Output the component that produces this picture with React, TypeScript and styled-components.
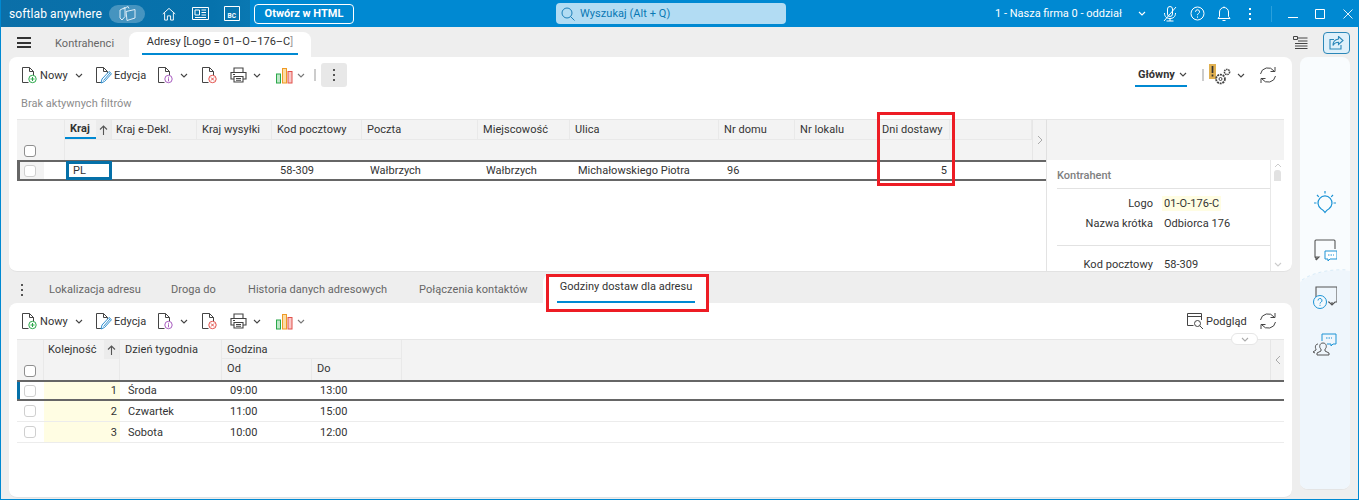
import React from "react";
import styled, { createGlobalStyle } from "styled-components";

const Global = createGlobalStyle`
  html, body { margin: 0; padding: 0; background: #fff; overflow: hidden; }
  * { box-sizing: border-box; }
  body { font-family: Roboto, "Liberation Sans", sans-serif; font-size: 11px; color: #333; }
`;

const Win = styled.div`
  width: 1359px; height: 500px; display: flex; flex-direction: column;
  background: #eeeeee; border: 1px solid #0089d2; border-top: 0; overflow: hidden; position: relative;
`;
const TitleBar = styled.header`
  height: 27px; flex: none; display: flex; align-items: center; background: #0089d2; margin: 0 -1px; color: #fff;
`;
const Brand = styled.div`
  width: 250px; height: 27px; flex: none; display: flex; align-items: center; padding-left: 9px;
  background: linear-gradient(90deg, #0b6fa8 0%, #0672ac 85%, #0a78b2 100%);
`;
const BrandName = styled.span`font-size: 12px; width: 100px; white-space: nowrap; letter-spacing: .1px;`;
const BrandPill = styled.div`
  width: 36px; height: 18px; border-radius: 9px; background: rgba(255,255,255,.25); display: flex; align-items: center; justify-content: center; margin-right: 17px;
`;
const HtmlButton = styled.button`
  width: 100px; height: 20px; margin-left: 4px; border: 1px solid #fff; border-radius: 4px; background: transparent; color: #fff; font: 700 11px Roboto, sans-serif; padding: 0;
`;
const SearchBox = styled.div`
  width: 230px; height: 21px; margin-left: 202px; border-radius: 4px; background: #b2dcf3; color: #0a78b4; display: flex; align-items: center; gap: 5px; padding-left: 5px; font-size: 11px; letter-spacing: .05px;
`;
const Company = styled.span`margin-left: 209px; width: 127px; white-space: nowrap; font-size: 11px;`;
const TitleIcons = styled.div`display: flex; align-items: center; margin-left: 14px;`;
const TIcon = styled.span<{ $w: number; $pl?: number }>`width: ${p => p.$w}px; height: 20px; padding-left: ${p => p.$pl ?? 0}px; display: flex; align-items: center; justify-content: center; flex: none;`;
const TitleSep = styled.i`width: 1px; height: 16px; background: #2aa0dc; display: block;`;
const BcText = styled.text`font: 700 6.5px Roboto, sans-serif; fill: #fff;`;

const StripTop = styled.div`height: 30px; flex: none; display: flex; align-items: flex-end; padding-left: 16px;`;
const Burger = styled.div`width: 14px; height: 11px; margin-bottom: 9px; border-top: 2px solid #333; border-bottom: 2px solid #333; position: relative; margin-right: 24px;
  &::after { content: ""; position: absolute; left: 0; right: 0; top: 2.5px; height: 2px; background: #333; }`;
const PlainTab = styled.span<{ $w?: number }>`
  color: #666; font-size: 11px; white-space: nowrap; ${p => p.$w ? `width:${p.$w}px;` : ""} padding-bottom: 7px; letter-spacing: .05px;
`;
const ActiveTab = styled.div<{ $w: number; $pad: number; $h: number }>`
  width: ${p => p.$w}px; height: ${p => p.$h}px; background: #fff; border-radius: 8px 8px 0 0; padding: 0 ${p => p.$pad}px; display: flex; flex-direction: column; align-items: stretch; text-align: center; color: #333; white-space: nowrap; letter-spacing: .03px;
`;
const TabLabel = styled.span`flex: 1; display: flex; align-items: center; justify-content: center; padding-bottom: 2px;`;
const TabMark = styled.i<{ $mb: number }>`display: block; height: 2px; background: #0089d2; margin-bottom: ${p => p.$mb}px;`;
const Dim = styled.span`color: #999;`;
const StripRight = styled.div`margin-left: auto; display: flex; align-items: center; height: 30px; align-self: flex-start; margin-right: 8px; padding-top: 1px;`;
const ShareBtn = styled.div`width: 27px; height: 22px; margin-left: 15px; border: 1px solid #2b87b8; border-radius: 4px; background: #dff0fa; display: flex; align-items: center; justify-content: center;`;

const Workspace = styled.div`flex: 1; display: flex; min-height: 0; padding-left: 8px;`;
const MainCol = styled.div`width: 1283px; display: flex; flex-direction: column; flex: none;`;
const Panel = styled.section<{ $h: number }>`
  height: ${p => p.$h}px; background: #fff; border-radius: 8px; flex: none; padding: 0 8px; position: relative; border-bottom: 1px solid #e2e2e2; display: flex; flex-direction: column;
`;
const Toolbar = styled.div`height: 24px; margin-top: 6px; display: flex; align-items: center; flex: none; padding-left: 4px; color: #333;`;
const TLabel = styled.span<{ $w: number }>`width: ${p => p.$w}px; white-space: nowrap; color: #333; font-size: 11px; letter-spacing: .05px;`;
const TSlot = styled.span<{ $w: number }>`width: ${p => p.$w}px; flex: none; display: flex; align-items: center;`;
const Chevron = styled.span<{ $w: number }>`width: ${p => p.$w}px; flex: none; display: flex; justify-content: center; align-items: center;`;
const VSep = styled.i<{ $ml: number; $mr: number }>`width: 2px; height: 12px; background: #ccc; margin-left: ${p => p.$ml}px; margin-right: ${p => p.$mr}px; flex: none;`;
const DotsBtn = styled.div`width: 26px; height: 24px; border-radius: 3px; background: #e8e8e8; display: flex; align-items: center; justify-content: center;`;
const Spring = styled.div`flex: 1;`;
const MainView = styled.div`width: 52px; height: 24px; border-bottom: 2px solid #0089d2; display: flex; align-items: center; padding: 0 0 0 3px; font-weight: 700; color: #333; gap: 4px; flex: none;`;
const FilterLine = styled.div`height: 16px; margin-top: 9px; margin-bottom: 7px; padding-left: 4px; color: #8c8c8c; font-size: 11px; line-height: 16px; letter-spacing: .03px; flex: none;`;

const Table = styled.div`flex: 1; display: flex; min-height: 0;`;
const TableStack = styled.div`flex: 1; display: flex; flex-direction: column; min-height: 0; margin-top: 6px;`;
const HeadLine = styled.div`display: flex; flex: none;`;
const LeftPane = styled.div<{ $w: number }>`width: ${p => p.$w}px; flex: none; display: flex; flex-direction: column;`;
const HeadGrid = styled.div<{ $cols: string; $rows: string; $grow?: boolean }>`
  flex: ${p => p.$grow ? "1" : "none"}; display: grid; grid-template-columns: ${p => p.$cols}; grid-template-rows: ${p => p.$rows}; background: #f3f3f3; border-top: 1px solid #e6e6e6;
`;
const Hd = styled.div<{ $pl?: number; $b?: boolean; $line?: boolean; $nr?: boolean; $pb?: number }>`
  padding-left: ${p => p.$pl ?? 5}px; padding-bottom: ${p => p.$pb ?? 1}px; color: #333; white-space: nowrap; display: flex; align-items: center; font-size: 11px; letter-spacing: .06px; font-weight: ${p => p.$b ? 700 : 400};
  border-right: ${p => p.$nr ? 0 : "1px solid #e9e9e9"}; ${p => p.$line ? "border-bottom: 1px solid #e9e9e9;" : ""} min-width: 0;
`;
const SortHd = styled(Hd)`padding: 0; align-items: stretch;`;
const SortName = styled.span<{ $w: number; $mark?: boolean }>`width: ${p => p.$w}px; display: flex; align-items: center; padding-left: ${p => p.$mark ? 5 : 4}px; padding-bottom: 1px; ${p => p.$mark ? "border-bottom: 2px solid #0089d2;" : ""}`;
const SortArrow = styled.span`flex: 1; display: flex; align-items: center; justify-content: center; background: #ececec;`;
const CheckHd = styled(Hd)`padding: 0 0 1px 7px; align-items: flex-end; grid-row: 1 / 3;`;
const EndHd = styled(Hd)`grid-column: 13; grid-row: 1 / 3; padding: 0; justify-content: center; border-left: 1px solid #e6e6e6; border-right: 0;`;
const FillHd = styled(Hd)`grid-column: 2 / 13; border-right: 0;`;
const GroupHd = styled(Hd)`grid-column: 4 / 6;`;
const Box = styled.span<{ $dark?: boolean }>`display: block; width: 12px; height: 12px; border: 1px solid ${p => p.$dark ? "#8f8f8f" : "#cfcfcf"}; border-radius: 3px; background: #fff; margin-bottom: ${p => p.$dark ? 2 : 0}px;`;
const Row = styled.div<{ $cols: string; $sel?: boolean }>`
  display: grid; grid-template-columns: ${p => p.$cols}; height: 21px; align-items: stretch;
  ${p => p.$sel ? "border-top: 2px solid #666; border-bottom: 2px solid #666;" : "border-bottom: 1px solid #ececec;"}
  position: relative; flex: none;
`;
const Cell = styled.div<{ $r?: boolean; $pl?: number; $y?: boolean; $focus?: boolean }>`
  display: flex; align-items: center; white-space: nowrap; color: #333; font-size: 11px; letter-spacing: .01px; min-width: 0;
  justify-content: ${p => p.$r ? "flex-end" : "flex-start"};
  padding-left: ${p => p.$pl ?? 8}px; padding-right: 3px;
  ${p => p.$y ? "background: #fffde3;" : ""}
  ${p => p.$focus ? "box-shadow: inset 0 0 0 3px #0570a8; padding-left: 7px; margin: -1px 0 -1px 1px; background: #fff; position: relative;" : ""}
`;
const CheckCell = styled(Cell)`background: linear-gradient(90deg, #f3f3f3 27px, #fff 27px); padding-left: 7px;`;
const BlueTick = styled.i<{ $grey?: boolean }>`position: absolute; left: 0; top: 0; bottom: 0; width: 3px; background: ${p => p.$grey ? "#666" : "#0570a8"};`;
const Detail = styled.div`flex: 1; display: flex; flex-direction: column; min-width: 0;`;
const DetailHead = styled.div`height: 41px; background: #f3f3f3; border-top: 1px solid #e6e6e6; border-left: 1px solid #e0e0e0; flex: none;`;
const DetailBody = styled.div`flex: 1; display: flex; min-height: 0; overflow: hidden; border-left: 1px solid #e3e3e3;`;
const DetailForm = styled.div`width: 224px; flex: none; padding: 0 0 0 10px; border-right: 1px solid #e8e8e8; overflow: hidden;`;
const DetailTitle = styled.div`height: 29px; padding-top: 8px; line-height: 16px; color: #808080; font-weight: 500; border-bottom: 1px solid #e2e2e2;`;
const Field = styled.div<{ $mt?: number }>`display: flex; align-items: center; height: 20px; margin-top: ${p => p.$mt ?? 0}px; letter-spacing: .05px;`;
const FieldName = styled.span`width: 96px; text-align: right; color: #333; white-space: nowrap; flex: none;`;
const FieldValue = styled.span<{ $y?: boolean }>`margin-left: 9px; padding: 1px 2px; color: #333; ${p => p.$y ? "background: #fffde3;" : ""}`;
const Rule = styled.div`height: 1px; background: #e2e2e2; margin-top: 12px;`;
const ScrollCol = styled.div`flex: 1; display: flex; flex-direction: column; align-items: center; padding-top: 3px;`;
const ScrollThumb = styled.i`display: block; width: 7px; height: 11px; background: #e2e2e2; border-radius: 3px 3px 0 0; margin-top: 2px;`;
const ScrollDown = styled.span`margin-top: auto; padding-bottom: 1px;`;
const ArrowCol = styled.div`width: 14px; flex: none; border-left: 1px solid #e6e6e6; border-top: 1px solid #e6e6e6; display: flex; align-items: center; justify-content: center; background: #f3f3f3;`;

const BottomTabs = styled.div`height: 31px; flex: none; display: flex; align-items: flex-end; padding-left: 11px;`;
const TabDots = styled.span`width: 4px; margin-bottom: 7px; margin-right: 25px; display: flex;`;
const Pill = styled.div`position: absolute; right: 34px; top: 30px; width: 27px; height: 12px; border-radius: 6px; background: #fff; border: 1px solid #e6e6e6; display: flex; align-items: center; justify-content: center; z-index: 2;`;
const RedBox = styled.div<{ $l: number; $t: number; $w: number; $h: number }>`position: absolute; left: ${p => p.$l}px; top: ${p => p.$t}px; width: ${p => p.$w}px; height: ${p => p.$h}px; border: 3px solid #ed1c24; z-index: 5; pointer-events: none;`;

const Sidebar = styled.aside`
  width: 50px; height: 433px; margin-left: 8px; background: #f9fcfe; border-radius: 8px; flex: none; display: flex; flex-direction: column; align-items: center; padding-top: 134px; gap: 23px; position: relative; overflow: hidden; border-bottom: 1px solid #e4e4e4;
`;
const SideWave = styled.svg`position: absolute; left: 0; top: 210px; width: 50px; height: 223px;`;
const SideIcon = styled.svg`width: 24px; height: 24px; position: relative; flex: none;`;

/* ---------- icons ---------- */
const S = "#444";
const Doc = ({ badge }: { badge: "new" | "edit" | "info" | "del" }) => (
  <svg width="17" height="17" viewBox="0 0 17 17" fill="none" style={{ display: "block" }}>
    <path d="M1.5 .5h7l4 4v4M8.5.5v4h4M1.5.5v15h6" stroke={S} strokeWidth="1" />
    {badge === "new" && (<g><circle cx="11.5" cy="12" r="3.7" fill="#fff" stroke="#2aa84a" /><path d="M11.5 10v4M9.5 12h4" stroke="#2aa84a" /></g>)}
    {badge === "info" && (<g><circle cx="11.5" cy="12" r="3.7" fill="#fff" stroke="#a85cc0" /><path d="M11.5 11.3v3M11.5 9.8v.9" stroke="#a85cc0" /></g>)}
    {badge === "del" && (<g><circle cx="11.5" cy="12" r="3.7" fill="#fff" stroke="#e2504a" /><path d="M10 10.5l3 3M13 10.5l-3 3" stroke="#e2504a" /></g>)}
    {badge === "edit" && (<g><path d="M6 16l1-4L14 4.500l2.500 2.200L9.500 14.500z" fill="#fff" stroke="#2f8fd0" /><path d="M8.500 13.500l6.500-7.500" stroke="#2f8fd0" /></g>)}
  </svg>
);
const Chev = ({ c = "#444", w = 8 }: { c?: string; w?: number }) => (
  <svg width={w} height="5" viewBox="0 0 8 5" fill="none"><path d="M1 1l3 3 3-3" stroke={c} strokeWidth="1.1" /></svg>
);
const Printer = () => (
  <svg width="17" height="16" viewBox="0 0 17 16" fill="none" style={{ display: "block" }}>
    <path d="M4 5V1h9v4M4 12H1V5.5h15V12h-3" stroke={S} strokeWidth="1.1" />
    <path d="M4 9.5h9v5.500H4zM3 7.500h2M6 11.500h5M6 13.200h5" stroke={S} strokeWidth="1.1" />
  </svg>
);
const Bars = () => (
  <svg width="17" height="17" viewBox="0 0 17 17" fill="none" style={{ display: "block" }}>
    <rect x=".5" y="7" width="4" height="9" fill="#bfe8c8" stroke="#2aa84a" />
    <rect x="6.5" y="1.5" width="4" height="14.5" fill="#fbdca6" stroke="#ef9a25" />
    <rect x="12" y="4.5" width="4" height="11.5" fill="#f8c9c9" stroke="#e2504a" />
  </svg>
);
const Refresh = () => (
  <svg width="18" height="18" viewBox="0 0 18 18" fill="none" style={{ display: "block" }}>
    <path d="M1.5 8A7.5 7.5 0 0 1 15 5M16.5 10A7.5 7.5 0 0 1 3 13" stroke={S} />
    <path d="M16 1v4.500h-4.500M2 17v-4.500h4.500" stroke={S} />
  </svg>
);
const VDots = ({ c = "#555" }: { c?: string }) => (
  <svg width="4" height="12" viewBox="0 0 4 12"><g fill={c}><rect x="1" y="0" width="2" height="2" /><rect x="1" y="5" width="2" height="2" /><rect x="1" y="10" width="2" height="2" /></g></svg>
);
const Up = () => (
  <svg width="9" height="10" viewBox="0 0 9 10" fill="none"><path d="M4.500 10V1M1 4.500L4.500 1 8 4.500" stroke="#555" strokeWidth="1.1" /></svg>
);
const Gears = () => (
  <svg width="23" height="22" viewBox="0 0 23 22" fill="none" style={{ display: "block" }}>
    <rect x="0" y="0" width="7" height="15" fill="#e0b050" />
    <path d="M3.500 2v7M3.500 10.500v2" stroke="#333" strokeWidth="1.700" />
    <circle cx="11.500" cy="15" r="4.400" stroke={S} strokeDasharray="2 .8" strokeWidth="1.800" />
    <circle cx="11.500" cy="15" r="1.500" stroke={S} />
    <circle cx="18" cy="8" r="2.600" stroke={S} strokeDasharray="1.500 .7" strokeWidth="1.500" />
  </svg>
);

const topCols = "48px 47px 85px 75px 90px 116px 92px 149px 76px 83px 72px 82px 14px";
const botCols = "27px 76px 102px 90px 90px 1fr";

const ActionItems = () => (
  <>
    <TSlot $w={19}><Doc badge="new" /></TSlot>
    <TLabel $w={33}>Nowy</TLabel>
    <Chevron $w={12}><Chev /></Chevron>
    <TSlot $w={10} />
    <TSlot $w={19}><Doc badge="edit" /></TSlot>
    <TLabel $w={43}>Edycja</TLabel>
    <TSlot $w={21}><Doc badge="info" /></TSlot>
    <Chevron $w={12}><Chev /></Chevron>
    <TSlot $w={11} />
    <TSlot $w={29}><Doc badge="del" /></TSlot>
    <TSlot $w={21}><Printer /></TSlot>
    <Chevron $w={12}><Chev /></Chevron>
    <TSlot $w={13} />
    <TSlot $w={19}><Bars /></TSlot>
    <Chevron $w={12}><Chev c="#777" /></Chevron>
  </>
);

export default function App() {
  return (
    <Win>
      <Global />
      <TitleBar>
        <Brand>
          <BrandName>softlab anywhere</BrandName>
          <BrandPill>
            <svg width="17" height="15" viewBox="0 0 17 15" fill="none" stroke="#dcebf5"><path d="M1 4l5-2.500v9L3 14 1 12zM4 3l5-2.500 1 2M7 5.500l9-2v8.500l-8 2.500z" /></svg>
          </BrandPill>
          <TIcon $w={14}>
            <svg width="15" height="14" viewBox="0 0 15 14" fill="none" stroke="#fff"><path d="M.8 7L7.500 1l6.700 6M2.800 5.500v8h3V9h3.400v4.500h3v-8" /></svg>
          </TIcon>
          <TIcon $w={48}>
            <svg width="17" height="13" viewBox="0 0 17 13" fill="none" stroke="#fff"><path d="M.5.500h16v12H.5zM3 3h4.500v5H3zM9.500 3H14M9.500 5.500H14M9.500 8H14M3 10.500h11" /></svg>
          </TIcon>
          <TIcon $w={16}>
            <svg width="16" height="15" viewBox="0 0 16 15" fill="none"><path d="M.5.500h15v14H.5z" stroke="#fff" /><BcText x="3.500" y="11.500">BC</BcText></svg>
          </TIcon>
        </Brand>
        <HtmlButton>Otwórz w HTML</HtmlButton>
        <SearchBox>
          <svg width="14" height="14" viewBox="0 0 14 14" fill="none" stroke="#1d7fb8"><circle cx="6" cy="6" r="5" /><path d="M9.500 9.500L13.500 13.500" /></svg>
          Wyszukaj (Alt + Q)
        </SearchBox>
        <Company>1 - Nasza firma 0 - oddział</Company>
        <TitleIcons>
          <TIcon $w={12}><Chev c="#fff" /></TIcon>
          <TIcon $w={40} $pl={4}>
            <svg width="14" height="16" viewBox="0 0 14 16" fill="none" stroke="#fff"><path d="M4.500 8V3a2.500 2.500 0 0 1 5 0v5a2.500 2.500 0 0 1-5 0zM1.500 7c0 4 2.500 5.500 5.500 5.500S12.500 11 12.500 7M7 12.500V15M3.500 15h7M1 15L13 1" /></svg>
          </TIcon>
          <TIcon $w={18}>
            <svg width="15" height="15" viewBox="0 0 15 15" fill="none" stroke="#fff"><circle cx="7.500" cy="7.500" r="6.500" /><path d="M5.500 5.800a2 2 0 1 1 3 1.700c-.7.400-1 .8-1 1.700M7.500 10.500v1.200" /></svg>
          </TIcon>
          <TIcon $w={36}>
            <svg width="14" height="16" viewBox="0 0 14 16" fill="none" stroke="#fff"><path d="M1 12.500h12l-1.500-2V6a4.500 4.500 0 0 0-9 0v4.500zM5.500 14.500h3M7 1.500V.5" /></svg>
          </TIcon>
          <TIcon $w={16}><VDots c="#fff" /></TIcon>
          <TIcon $w={26}><TitleSep /></TIcon>
          <TIcon $w={18}><svg width="10" height="10" viewBox="0 0 10 10"><path d="M0 8.500h10" stroke="#fff" /></svg></TIcon>
          <TIcon $w={36}><svg width="10" height="10" viewBox="0 0 10 10" fill="none"><path d="M.5.500h9v9h-9z" stroke="#fff" /></svg></TIcon>
          <TIcon $w={20}><svg width="10" height="10" viewBox="0 0 10 10" fill="none" stroke="#dff1fb"><path d="M.5.500l9 9M9.500.500l-9 9" /></svg></TIcon>
        </TitleIcons>
      </TitleBar>

      <StripTop>
        <Burger />
        <PlainTab $w={74}>Kontrahenci</PlainTab>
        <ActiveTab $w={182} $pad={13} $h={25}>
          <TabLabel>Adresy [Logo = 01–O–176–C<Dim>]</Dim></TabLabel>
          <TabMark $mb={2} />
        </ActiveTab>
        <StripRight>
          <svg width="15" height="14" viewBox="0 0 15 14" fill="none" stroke="#444"><path d="M.500.500h4v3h-4zM5 2h9.500M5 5h9.500M2 7.500h12.500M2 10h12.500M2 12.500h12.500" /></svg>
          <ShareBtn>
            <svg width="15" height="14" viewBox="0 0 15 14" fill="none" stroke="#2b87b8" strokeWidth="1.1"><path d="M12 9v4H1V3.500h4" /><path d="M9.500.500L14 4.500 9.500 8.500V6.300C6.500 6.300 5 7.500 4 9.500c0-4 2-6 5.500-6.500z" /></svg>
          </ShareBtn>
        </StripRight>
      </StripTop>

      <Workspace>
        <MainCol>
          <Panel $h={215}>
            <Toolbar>
              <ActionItems />
              <VSep $ml={7} $mr={5} />
              <DotsBtn><VDots /></DotsBtn>
              <Spring />
              <MainView>Główny <Chev /></MainView>
              <VSep $ml={15} $mr={5} />
              <Gears />
              <Chevron $w={18}><Chev /></Chevron>
              <TSlot $w={9} />
              <TSlot $w={19}><Refresh /></TSlot>
              <TSlot $w={6} />
            </Toolbar>
            <FilterLine>Brak aktywnych filtrów</FilterLine>
            <Table>
              <LeftPane $w={1029}>
                <HeadGrid $cols={topCols} $rows="20px 20px">
                  <CheckHd><Box $dark /></CheckHd>
                  <SortHd $line>
                    <SortName $w={31} $mark><b>Kraj</b></SortName>
                    <SortArrow><Up /></SortArrow>
                  </SortHd>
                  {["Kraj e-Dekl.", "Kraj wysyłki", "Kod pocztowy", "Poczta", "Miejscowość", "Ulica", "Nr domu", "Nr lokalu", "Dni dostawy"].map(t => (
                    <Hd key={t} $line $pl={t === "Dni dostawy" || t === "Kraj e-Dekl." ? 4 : 5}>{t}</Hd>
                  ))}
                  <Hd $line />
                  <EndHd>
                    <svg width="6" height="10" viewBox="0 0 6 10" fill="none"><path d="M1 1l4 4-4 4" stroke="#aaa" /></svg>
                  </EndHd>
                  <FillHd />
                </HeadGrid>
                <Row $cols={topCols} $sel>
                  <BlueTick $grey />
                  <CheckCell $pl={7}><Box /></CheckCell>
                  <Cell $focus>PL</Cell>
                  <Cell /><Cell />
                  <Cell>58-309</Cell>
                  <Cell>Wałbrzych</Cell>
                  <Cell>Wałbrzych</Cell>
                  <Cell>Michałowskiego Piotra</Cell>
                  <Cell>96</Cell>
                  <Cell />
                  <Cell $r>5</Cell>
                  <Cell /><Cell />
                </Row>
              </LeftPane>
              <Detail>
                <DetailHead />
                <DetailBody>
                  <DetailForm>
                    <DetailTitle>Kontrahent</DetailTitle>
                    <Field $mt={4}><FieldName>Logo</FieldName><FieldValue $y>01-O-176-C</FieldValue></Field>
                    <Field><FieldName>Nazwa krótka</FieldName><FieldValue>Odbiorca 176</FieldValue></Field>
                    <Rule />
                    <Field $mt={8}><FieldName>Kod pocztowy</FieldName><FieldValue>58-309</FieldValue></Field>
                  </DetailForm>
                  <ScrollCol>
                    <svg width="8" height="5" viewBox="0 0 8 5" fill="none"><path d="M1 4l3-3 3 3" stroke="#ccc" /></svg>
                    <ScrollThumb />
                    <ScrollDown><Chev c="#ccc" /></ScrollDown>
                  </ScrollCol>
                </DetailBody>
              </Detail>
            </Table>
          </Panel>

          <BottomTabs>
            <TabDots><VDots /></TabDots>
            <PlainTab $w={122}>Lokalizacja adresu</PlainTab>
            <PlainTab $w={77}>Droga do</PlainTab>
            <PlainTab $w={171}>Historia danych adresowych</PlainTab>
            <PlainTab $w={124}>Połączenia kontaktów</PlainTab>
            <ActiveTab $w={166} $pad={14} $h={29}>
              <TabLabel>Godziny dostaw dla adresu</TabLabel>
              <TabMark $mb={0} />
            </ActiveTab>
          </BottomTabs>

          <Panel $h={195}>
            <Toolbar>
              <ActionItems />
              <Spring />
              <TSlot $w={19}>
                <svg width="17" height="16" viewBox="0 0 17 16" fill="none" stroke="#444"><path d="M.5 12.500V.500h14V7M.5 3.500h14M.5 12.500h6" /><circle cx="10.500" cy="10.500" r="3" /><path d="M12.700 12.700L16 16" /></svg>
              </TSlot>
              <TLabel $w={53}>Podgląd</TLabel>
              <TSlot $w={19}><Refresh /></TSlot>
              <TSlot $w={6} />
            </Toolbar>
            <Pill><Chev c="#aaa" w={10} /></Pill>
            <TableStack>
              <HeadLine>
                <HeadGrid $cols={botCols} $rows="19px 21px" $grow>
                  <CheckHd><Box $dark /></CheckHd>
                  <SortHd>
                    <SortName $w={60}>Kolejność</SortName>
                    <SortArrow><Up /></SortArrow>
                  </SortHd>
                  <Hd>Dzień tygodnia</Hd>
                  <GroupHd $line $pb={0}>Godzina</GroupHd>
                  <Hd $nr />
                  <Hd />
                  <Hd />
                  <Hd $pb={2}>Od</Hd>
                  <Hd $pb={2}>Do</Hd>
                  <Hd $nr />
                </HeadGrid>
                <ArrowCol>
                  <svg width="6" height="10" viewBox="0 0 6 10" fill="none"><path d="M5 1L1 5l4 4" stroke="#aaa" /></svg>
                </ArrowCol>
              </HeadLine>
              <Row $cols={botCols} $sel>
                <BlueTick />
                <Cell $pl={7}><Box /></Cell>
                <Cell $y $r>1</Cell>
                <Cell>Środa</Cell>
                <Cell>09:00</Cell>
                <Cell>13:00</Cell>
                <Cell />
              </Row>
              <Row $cols={botCols}>
                <Cell $pl={7}><Box /></Cell>
                <Cell $y $r>2</Cell>
                <Cell>Czwartek</Cell>
                <Cell>11:00</Cell>
                <Cell>15:00</Cell>
                <Cell />
              </Row>
              <Row $cols={botCols}>
                <Cell $pl={7}><Box /></Cell>
                <Cell $y $r>3</Cell>
                <Cell>Sobota</Cell>
                <Cell>10:00</Cell>
                <Cell>12:00</Cell>
                <Cell />
              </Row>
            </TableStack>
          </Panel>
        </MainCol>

        <Sidebar>
          <SideWave viewBox="0 0 50 223" fill="none">
            <path d="M0 15C15 4 35 2 50 4V223H0z" fill="#eff6fc" />
            <path d="M2 13C15 4 35 2 48 3" stroke="#d8ebf8" strokeDasharray="3 3" />
          </SideWave>
          <SideIcon viewBox="0 0 24 24" fill="none" stroke="#1c93d5" strokeWidth="1.200">
            <path d="M8 17.700A7 7 0 1 1 16 17.700C14.500 18.600 13 20 12 21.500 11 20 9.500 18.600 8 17.700z" />
            <path d="M12 0v2.500M1 12h2.500M20.500 12H23M4 4l1.800 1.800M20 4l-1.800 1.800" />
          </SideIcon>
          <SideIcon viewBox="0 0 24 24" fill="none">
            <path d="M3 22l3-3H2V3a1 1 0 0 1 1-1h18a1 1 0 0 1 1 1v8M2 19l2 3M3 22v-3" stroke="#555" strokeWidth="1.100" />
            <path d="M12 13h12v8h-7l-2 2v-2h-3z" fill="#fff" stroke="#1c93d5" />
            <path d="M15 17h6" stroke="#1c93d5" strokeDasharray="1.500 1" />
          </SideIcon>
          <SideIcon viewBox="0 0 24 24" fill="none">
            <path d="M3 12V2h21v15h-2l-3 3-3-3h-1M19 20v-3" stroke="#555" strokeWidth="1.100" />
            <circle cx="7" cy="17" r="6.500" fill="#f3f9fd" stroke="#1c93d5" />
            <path d="M5 15.500a2 2 0 1 1 3 1.700c-.7.400-1 .8-1 1.300M7 19.800v1" stroke="#1c93d5" />
          </SideIcon>
          <SideIcon viewBox="0 0 24 24" fill="none">
            <path d="M9 9V2h14v10h-3l-2 2v-2h-4" stroke="#1c93d5" />
            <path d="M13 6h6" stroke="#1c93d5" strokeDasharray="1.500 1" />
            <path d="M4 23v-2l4-2v-2c-2-1-2-6 2-6s4 5 2 6v2l4 2v2zM5 12c-3 0-3 4-2 5v1l-3 2 2 1" stroke="#555" />
          </SideIcon>
        </Sidebar>
      </Workspace>

      <RedBox $l={876} $t={112} $w={78} $h={74} />
      <RedBox $l={545} $t={274} $w={163} $h={38} />
    </Win>
  );
}
